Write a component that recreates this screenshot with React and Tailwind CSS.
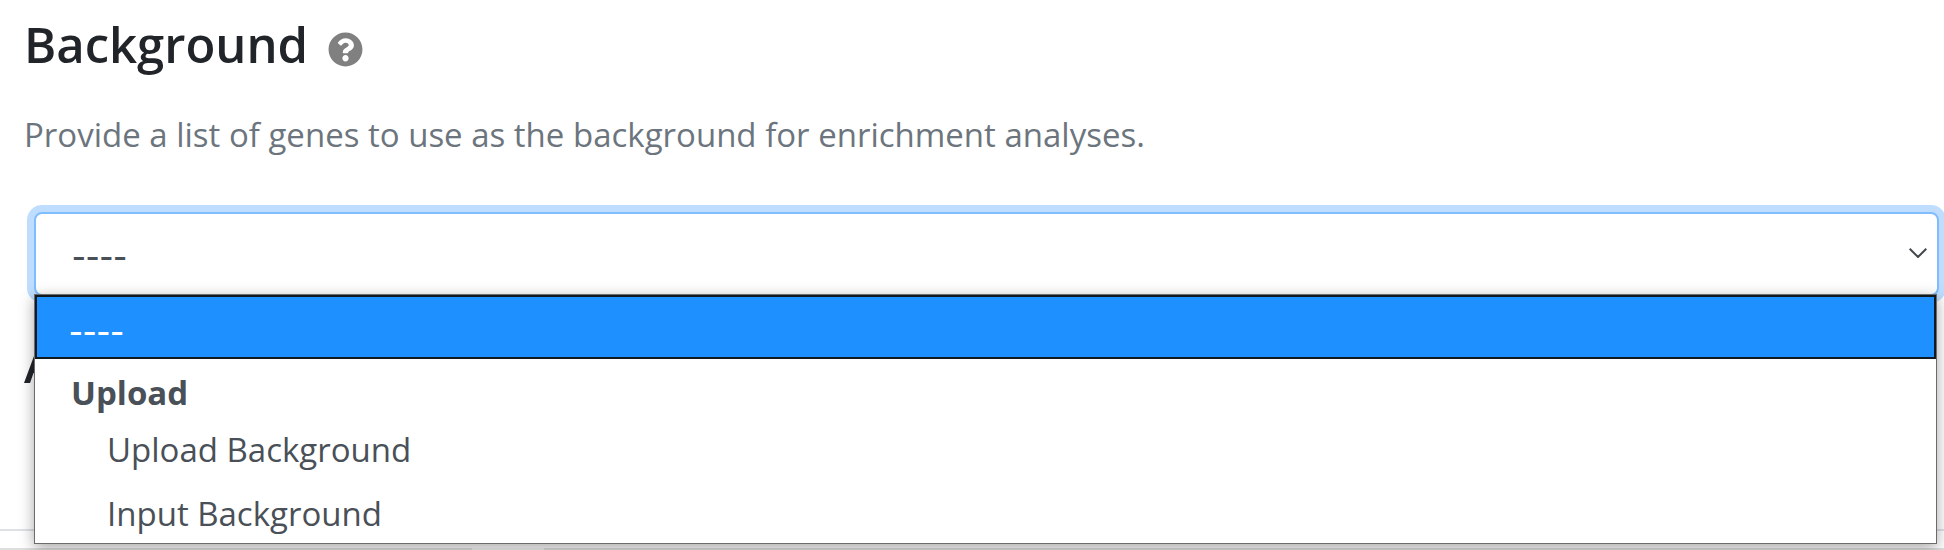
import { FaQuestionCircle } from "react-icons/fa";

const uploadOptions = ["Upload Background", "Input Background"];

function BackgroundSelect() {
  return (
    <div className="relative ml-2.5 text-[33px] text-[#495057]">
      <select
        id="background"
        defaultValue=""
        className="block h-[84px] w-full appearance-none rounded-lg border-2 border-[#80bdff] bg-white px-9 pt-1 font-['DejaVu_Sans',sans-serif] text-[38px] leading-[64px] text-[#495057] ring-7 ring-[#bfdeff] outline-none"
      >
        <option value="">----</option>
        <optgroup label="Upload">
          {uploadOptions.map((name) => (
            <option key={name}>{name}</option>
          ))}
        </optgroup>
      </select>
      <svg
        viewBox="0 0 18 10"
        className="pointer-events-none absolute top-9 right-3 h-2.5 w-[18px] fill-none stroke-[#43484d] stroke-2"
        aria-hidden="true"
      >
        <path d="M0.7 0.8 9 9 17.3 0.8" />
      </svg>
      <div
        role="listbox"
        aria-label="Background options"
        className="absolute top-[82px] right-0.5 left-0 border border-[#6b6b6b] bg-white shadow-[0_4px_14px_rgba(0,0,0,0.35)]"
      >
        <div
          role="option"
          aria-selected="true"
          className="h-16 border-2 border-[#101820] bg-[#1e90ff] px-8 font-['DejaVu_Sans',sans-serif] text-[38px] leading-[68px] text-white"
        >
          ----
        </div>
        <div role="group" aria-label="Upload">
          <div className="h-14 px-9 leading-[68px] font-bold">Upload</div>
          {uploadOptions.map((name) => (
            <div key={name} role="option" aria-selected="false" className="h-16 px-[72px] leading-[70px]">
              {name}
            </div>
          ))}
        </div>
      </div>
    </div>
  );
}

export default function App() {
  return (
    <div className="overflow-hidden bg-white font-['Open_Sans','Noto_Sans',sans-serif]">
      <main className="border-b-2 border-[#dee2e6] pr-[5px] pl-6">
        <header className="flex items-center gap-5 pt-3">
          <h2 className="text-[49px] leading-[64px] font-semibold text-[#212529]">
            <label htmlFor="background">Background</label>
          </h2>
          <button type="button" aria-label="Help" className="mt-2.5 text-[35px] text-[#808080]">
            <FaQuestionCircle />
          </button>
        </header>
        <p className="pt-8 text-[33px] leading-[54px] text-[#6c757d]">
          Provide a list of genes to use as the background for enrichment analyses.
        </p>
        <div className="pt-[50px]">
          <BackgroundSelect />
        </div>
        <h2 className="pt-9 pb-[133px] text-[49px] leading-[64px] font-semibold text-[#212529]">A</h2>
      </main>
      <footer className="mt-[17px] h-0.5 bg-[#dedede] pl-[448px]">
        <div className="ml-6 h-0.5 w-[72px] bg-[#f2f2f2]" />
      </footer>
    </div>
  );
}
